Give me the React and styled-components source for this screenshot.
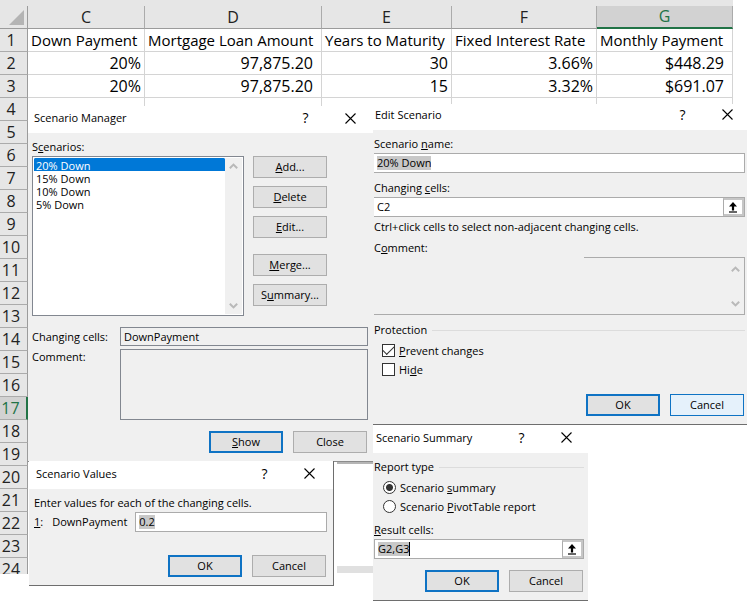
// Packages
import React from 'react';
import { useState } from 'react';
import styled, { createGlobalStyle } from 'styled-components';

const columns = [
  { id: 'C', width: 117 },
  { id: 'D', width: 177 },
  { id: 'E', width: 130 },
  { id: 'F', width: 145 },
  { id: 'G', width: 136 },
];

const titles = [
  'Down Payment',
  'Mortgage Loan Amount',
  'Years to Maturity',
  'Fixed Interest Rate',
  'Monthly Payment',
];

const loans = [
  ['20%', '97,875.20', '30', '3.66%', '$448.29'],
  ['20%', '97,875.20', '15', '3.32%', '$691.07'],
];

const emptyRows = Array.from({ length: 21 }, (_, i) => i + 4);

const scenarios = ['20% Down', '15% Down', '10% Down', '5% Down'];

const Sheet = () => (
  <SheetView>
    <Table>
      <colgroup>
        <col style={{ width: 28 }} />
        {columns.map(({ id, width }) => (
          <col key={id} style={{ width }} />
        ))}
      </colgroup>
      <thead>
        <tr>
          <Corner>
            <svg width="15" height="15" viewBox="0 0 15 15" aria-hidden="true">
              <path d="M15 0V15H0Z" fill="#b4b4b4" />
            </svg>
          </Corner>
          {columns.map(({ id }) => (
            <ColumnHead key={id} scope="col" $active={id === 'G'}>
              {id}
            </ColumnHead>
          ))}
        </tr>
      </thead>
      <tbody>
        <tr>
          <RowHead scope="row">1</RowHead>
          {titles.map((title) => (
            <TitleCell key={title}>{title}</TitleCell>
          ))}
        </tr>
        {loans.map((loan, row) => (
          <tr key={row}>
            <RowHead scope="row">{row + 2}</RowHead>
            {loan.map((value, i) => (
              <ValueCell key={i} $currency={i === 1 || i === 4}>
                {value}
              </ValueCell>
            ))}
          </tr>
        ))}
        {emptyRows.map((row) => (
          <tr key={row}>
            <RowHead scope="row" $active={row === 17}>
              {row}
            </RowHead>
            {columns.map(({ id }) => (
              <EmptyCell key={id} $lined={row === 4} />
            ))}
          </tr>
        ))}
      </tbody>
    </Table>
  </SheetView>
);

const TitleBar = ({ title, ...rest }) => (
  <Bar {...rest}>
    <BarTitle>{title}</BarTitle>
    <BarButton aria-label="Help">?</BarButton>
    <BarButton aria-label="Close window">
      <svg width="11" height="11" viewBox="0 0 11 11" aria-hidden="true">
        <path d="M.5 .5L10.5 10.5M10.5 .5L.5 10.5" stroke="#000" strokeWidth="1.1" />
      </svg>
    </BarButton>
  </Bar>
);

const Arrow = ({ down }) => (
  <svg width="9" height="6" viewBox="0 0 9 6" aria-hidden="true">
    <path
      d={down ? 'M.8 .8L4.5 4.4L8.2 .8' : 'M.8 5.2L4.5 1.6L8.2 5.2'}
      fill="none"
      stroke="#b9b9b9"
      strokeWidth="2"
    />
  </svg>
);

const ScrollArrows = () => (
  <Scroll>
    <Arrow />
    <Arrow down />
  </Scroll>
);

const Picker = () => (
  <PickButton aria-label="Pick cells">
    <svg width="10" height="11" viewBox="0 0 10 11" aria-hidden="true">
      <path d="M5 0L9 4.4H6.1V8.4H3.9V4.4H1Z" fill="#000" />
      <path d="M1 10H9" stroke="#000" strokeWidth="1.2" />
    </svg>
  </PickButton>
);

const ScenarioManager = () => {
  const [current, setCurrent] = useState(scenarios[0]);

  return (
    <ManagerWindow aria-label="Scenario Manager">
      <TitleBar title="Scenario Manager" $height={27} $indent={6} $end={17} $lift={3} />
      <ManagerBody>
        <Label htmlFor="scenarios">
          S<u>c</u>enarios:
        </Label>
        <ManagerTop>
          <ListFrame>
            <List
              id="scenarios"
              size={4}
              value={current}
              onChange={(e) => setCurrent(e.target.value)}
            >
              {scenarios.map((name) => (
                <option key={name}>{name}</option>
              ))}
            </List>
            <ScrollArrows />
          </ListFrame>
          <ButtonStack>
            <Button><u>A</u>dd...</Button>
            <Button><u>D</u>elete</Button>
            <Button><u>E</u>dit...</Button>
            <StackGap />
            <Button><u>M</u>erge...</Button>
            <Button>S<u>u</u>mmary...</Button>
          </ButtonStack>
        </ManagerTop>
        <Details>
          <Label htmlFor="cells">Changing cells:</Label>
          <ReadOnly id="cells" readOnly value="DownPayment" />
          <Label htmlFor="note">Comment:</Label>
          <ReadOnlyArea id="note" readOnly value="" />
        </Details>
        <Actions>
          <Button $primary><u>S</u>how</Button>
          <Button>Close</Button>
        </Actions>
      </ManagerBody>
    </ManagerWindow>
  );
};

const EditScenario = () => (
  <EditWindow aria-label="Edit Scenario">
    <TitleBar title="Edit Scenario" $height={26} $indent={2} $end={13} $lift={5} />
    <EditBody>
      <Label htmlFor="name">
        Scenario <u>n</u>ame:
      </Label>
      <Field $open>
        <Marked id="name" defaultValue="20% Down" />
      </Field>
      <Label htmlFor="changing">
        Changing <u>c</u>ells:
      </Label>
      <Field $open>
        <Plain id="changing" defaultValue="C2" />
        <Picker />
      </Field>
      <Hint>Ctrl+click cells to select non-adjacent changing cells.</Hint>
      <Label htmlFor="comment">
        C<u>o</u>mment:
      </Label>
      <CommentFrame>
        <CommentArea id="comment" />
        <ScrollArrows />
      </CommentFrame>
      <Group>
        <Legend>Protection</Legend>
        <Choice>
          <Check type="checkbox" defaultChecked />
          <span><u>P</u>revent changes</span>
        </Choice>
        <Choice>
          <Check type="checkbox" />
          <span>Hi<u>d</u>e</span>
        </Choice>
      </Group>
      <Actions>
        <Button $primary>OK</Button>
        <Button $hot>Cancel</Button>
      </Actions>
    </EditBody>
  </EditWindow>
);

const ScenarioValues = () => (
  <ValuesWindow aria-label="Scenario Values">
    <TitleBar title="Scenario Values" $height={28} $indent={7} $end={17} $lift={3} />
    <ValuesBody>
      <Hint>Enter values for each of the changing cells.</Hint>
      <ValueRow>
        <ValueLabel htmlFor="value">
          <span><u>1</u>:</span>
          <span>DownPayment</span>
        </ValueLabel>
        <Field>
          <Marked id="value" defaultValue="0.2" />
        </Field>
      </ValueRow>
      <Actions>
        <Button $primary>OK</Button>
        <Button>Cancel</Button>
      </Actions>
    </ValuesBody>
  </ValuesWindow>
);

const ScenarioSummary = () => (
  <SummaryWindow aria-label="Scenario Summary">
    <TitleBar title="Scenario Summary" $height={28} $indent={3} $end={15} $lift={3} />
    <SummaryBody>
      <Group>
        <Legend>Report type</Legend>
        <Choice $radio>
          <Radio type="radio" name="report" defaultChecked />
          <span>Scenario <u>s</u>ummary</span>
        </Choice>
        <Choice $radio>
          <Radio type="radio" name="report" />
          <span>Scenario <u>P</u>ivotTable report</span>
        </Choice>
      </Group>
      <Label htmlFor="result">
        <u>R</u>esult cells:
      </Label>
      <Field>
        <Marked id="result" defaultValue="G2,G3" $caret />
        <Picker />
      </Field>
      <Actions>
        <Button $primary>OK</Button>
        <Button>Cancel</Button>
      </Actions>
    </SummaryBody>
  </SummaryWindow>
);

export default function App() {
  return (
    <>
      <GlobalStyle />
      <Desktop>
        <Sheet />
        <SheetEdge />
        <ScenarioManager />
        <EditScenario />
        <ScenarioValues />
        <ScenarioSummary />
      </Desktop>
    </>
  );
}

const GlobalStyle = createGlobalStyle`
  * {
    box-sizing: border-box;
  }

  body {
    margin: 0;
    background: #fff;
    color: #000;
    font-family: 'Open Sans', 'Noto Sans', sans-serif;
    font-size: 11px;
    line-height: 16px;
  }

  button, input, textarea, select {
    font: inherit;
    color: inherit;
    margin: 0;
  }
`;

const Desktop = styled.main`
  position: relative;
  min-height: 100vh;
  overflow: hidden;
`;

const SheetView = styled.div`
  height: 574px;
  overflow: hidden;
`;

const Table = styled.table`
  table-layout: fixed;
  width: 733px;
  border-collapse: separate;
  border-spacing: 0;
  border-top: 6px solid #e6e6e6;
  font-size: 16px;
  line-height: 22px;

  th, td {
    height: 23px;
    padding: 0 3px;
    font-weight: 400;
    white-space: nowrap;
  }
`;

const Corner = styled.td`
  background: #e6e6e6;
  border-right: 1px solid #9b9b9b;
  border-bottom: 1px solid #9b9b9b;
  text-align: right;

  svg {
    display: block;
    margin-left: auto;
  }
`;

const ColumnHead = styled.th`
  background: ${({ $active }) => ($active ? '#d2d2d2' : '#e6e6e6')};
  color: ${({ $active }) => ($active ? '#217346' : '#222')};
  border-right: 1px solid #ababab;
  border-bottom: ${({ $active }) => ($active ? '2px solid #217346' : '1px solid #9b9b9b')};
  line-height: 21px;
`;

const RowHead = styled.th`
  && {
    padding: 0 5px 0 0;
  }
  background: ${({ $active }) => ($active ? '#d2d2d2' : '#e6e6e6')};
  color: ${({ $active }) => ($active ? '#217346' : '#222')};
  border-right: ${({ $active }) => ($active ? '2px solid #217346' : '1px solid #9b9b9b')};
  border-bottom: 1px solid #ababab;
`;

const Cell = styled.td`
  border-right: 1px solid #d4d4d4;
  border-bottom: 1px solid #d4d4d4;
`;

const TitleCell = styled(Cell)`
  font-size: 15px;
  text-align: left;
`;

const ValueCell = styled(Cell)`
  && {
    padding-right: ${({ $currency }) => ($currency ? 8 : 3)}px;
  }
  text-align: right;
`;

const EmptyCell = styled.td`
  border-right: ${({ $lined }) => ($lined ? '1px solid #d4d4d4' : '0')};
`;

const SheetEdge = styled.div`
  position: absolute;
  left: 337px;
  top: 461px;
  width: 36px;
  height: 112px;
  border-top: 3px solid #b5b5b5;
  border-bottom: 7px solid #e0e0e0;
`;

const Window = styled.section`
  position: absolute;
  display: flex;
  flex-direction: column;
  background: #f0f0f0;
`;

const ManagerWindow = styled(Window)`
  left: 28px;
  top: 106px;
  width: 346px;
  border-bottom: 1px solid #8c8c8c;
`;

const EditWindow = styled(Window)`
  left: 373px;
  right: 0;
  top: 104px;
  border-bottom: 1px solid #6e6e6e;
`;

const ValuesWindow = styled(Window)`
  left: 29px;
  top: 461px;
  width: 305px;
  border-right: 1px solid #6e6e6e;
  border-bottom: 1px solid #6e6e6e;
`;

const SummaryWindow = styled(Window)`
  left: 373px;
  top: 425px;
  width: 215px;
  border-bottom: 1px solid #6e6e6e;
`;

const Bar = styled.header`
  display: flex;
  align-items: center;
  height: ${({ $height }) => $height}px;
  padding: 0 ${({ $end }) => $end}px ${({ $lift }) => $lift}px ${({ $indent }) => $indent}px;
  background: #fff;
`;

const BarTitle = styled.h2`
  flex: 1;
  margin: 0;
  font-size: 11px;
  font-weight: 400;
`;

const BarButton = styled.button`
  display: grid;
  place-items: center;
  width: 13px;
  padding: 0;
  border: 0;
  background: none;
  font-size: 14px;

  & + & {
    margin-left: 32px;
  }
`;

const ManagerBody = styled.div`
  display: flex;
  flex-direction: column;
  padding: 6px 6px 8px 4px;
`;

const Label = styled.label`
  display: block;
`;

const ManagerTop = styled.div`
  display: flex;
  gap: 9px;
  margin-top: 1px;
`;

const ListFrame = styled.div`
  display: flex;
  width: 212px;
  height: 160px;
  padding: 1px;
  border: 1px solid #828790;
  background: #fff;
`;

const List = styled.select`
  flex: 1;
  height: 100%;
  padding: 0;
  border: 0;
  outline: 0;
  background: #fff;
  overflow: hidden;

  option {
    min-height: 13px;
    height: 13px;
    padding: 0 2px 2px;
    line-height: 11px;
  }

  option:checked {
    background: #0078d7 linear-gradient(#0078d7, #0078d7);
    color: #fff;
  }
`;

const Scroll = styled.div`
  display: flex;
  flex-direction: column;
  justify-content: space-between;
  align-items: center;
  width: 17px;
  padding: 5px 0;
  background: #f0f0f0;
`;

const ButtonStack = styled.div`
  display: flex;
  flex-direction: column;
  gap: 8px;
`;

const StackGap = styled.div`
  height: 0;
`;

const Button = styled.button`
  width: 74px;
  height: 22px;
  padding: 0;
  border: ${({ $primary, $hot }) =>
    $primary ? '2px solid #0f73c4' : $hot ? '1px solid #0f73c4' : '1px solid #adadad'};
  background: ${({ $hot }) => ($hot ? '#e5f1fb' : '#e1e1e1')};
  line-height: 16px;
`;

const Details = styled.div`
  display: grid;
  grid-template-columns: 88px 1fr;
  row-gap: 3px;
  margin: 11px 0;

  label:first-child {
    align-self: center;
  }
`;

const ReadOnly = styled.input`
  width: 100%;
  height: 19px;
  padding: 0 3px;
  border: 1px solid #828790;
  background: #f0f0f0;
`;

const ReadOnlyArea = styled.textarea`
  width: 100%;
  height: 71px;
  border: 1px solid #828790;
  background: #f0f0f0;
  resize: none;
`;

const Actions = styled.div`
  display: flex;
  justify-content: flex-end;
  gap: 10px;
  padding-right: 1px;
`;

const Field = styled.div`
  display: flex;
  align-items: center;
  flex: 1;
  height: 20px;
  padding-left: 3px;
  border: 1px solid #ababab;
  border-left-width: ${({ $open }) => ($open ? 0 : 1)}px;
  background: #fff;
`;

const Plain = styled.input`
  flex: 1;
  min-width: 0;
  padding: 0;
  border: 0;
  outline: 0;
  background: none;
`;

// Sized to its content so the highlight hugs the text
const Marked = styled.input`
  field-sizing: content;
  height: 14px;
  margin-right: auto;
  padding: 0;
  border: 0;
  border-right: ${({ $caret }) => ($caret ? '1px solid #000' : '0')};
  outline: 0;
  background: #c8c8c8;
`;

const PickButton = styled.button`
  display: grid;
  place-items: center;
  width: 21px;
  height: 18px;
  padding: 0;
  border: 2px solid #c6c6c6;
  border-left: 1px solid #ababab;
  background: #fff;
`;

const EditBody = styled.div`
  display: flex;
  flex-direction: column;
  padding: 1px 2px 8px 1px;

  > ${Label} {
    margin-top: 5px;
  }

  ${Field} {
    flex: none;
    margin: 1px 0 2px;
  }

  ${Actions} {
    margin-top: 15px;
  }
`;

const Hint = styled.p`
  margin: 0;
`;

const CommentFrame = styled.div`
  display: flex;
  height: 58px;
  margin: 1px 0 7px;
  border-right: 1px solid #ababab;
  border-bottom: 1px solid #ababab;
  background: linear-gradient(#ababab, #ababab) right top / 160px 1px no-repeat;

  ${Scroll} {
    padding: 9px 0 7px;
    background: none;
  }
`;

const CommentArea = styled.textarea`
  flex: 1;
  border: 0;
  outline: 0;
  background: none;
  resize: none;
`;

const Group = styled.fieldset`
  min-width: 0;
  margin: 0;
  padding: 0;
  border: 0;
`;

const Legend = styled.legend`
  display: flex;
  align-items: center;
  gap: 5px;
  width: 100%;
  margin-bottom: 3px;
  padding: 0;

  &::after {
    content: '';
    flex: 1;
    height: 1px;
    background: #dcdcdc;
  }
`;

const Choice = styled.label`
  display: flex;
  align-items: center;
  gap: 4px;
  height: 19px;
  padding-left: ${({ $radio }) => ($radio ? 9 : 8)}px;
`;

const Check = styled.input`
  appearance: none;
  width: 13px;
  height: 13px;
  border: 1px solid #333;
  background: #fff;

  &:checked {
    display: grid;
    place-items: center;
  }

  &:checked::after {
    content: '';
    width: 10px;
    height: 5px;
    margin-bottom: 3px;
    border-left: 1px solid #333;
    border-bottom: 1px solid #333;
    transform: rotate(-45deg);
  }
`;

const Radio = styled.input`
  appearance: none;
  width: 13px;
  height: 13px;
  border: 1px solid #333;
  border-radius: 50%;
  background: #fff;

  &:checked {
    background: radial-gradient(circle, #333 3px, #fff 4px);
  }
`;

const ValuesBody = styled.div`
  display: flex;
  flex-direction: column;
  padding: 6px 6px 8px 5px;

  ${Actions} {
    margin-top: 23px;
  }
`;

const ValueRow = styled.div`
  display: flex;
  align-items: center;
  gap: 8px;
  margin-top: 1px;
`;

const ValueLabel = styled.label`
  display: flex;
  gap: 9px;
`;

const SummaryBody = styled.div`
  display: flex;
  flex-direction: column;
  padding: 6px 4px 8px 1px;

  ${Group} {
    margin-bottom: 6px;
  }

  ${Field} {
    flex: none;
    margin: 1px 0 11px;
  }
`;
